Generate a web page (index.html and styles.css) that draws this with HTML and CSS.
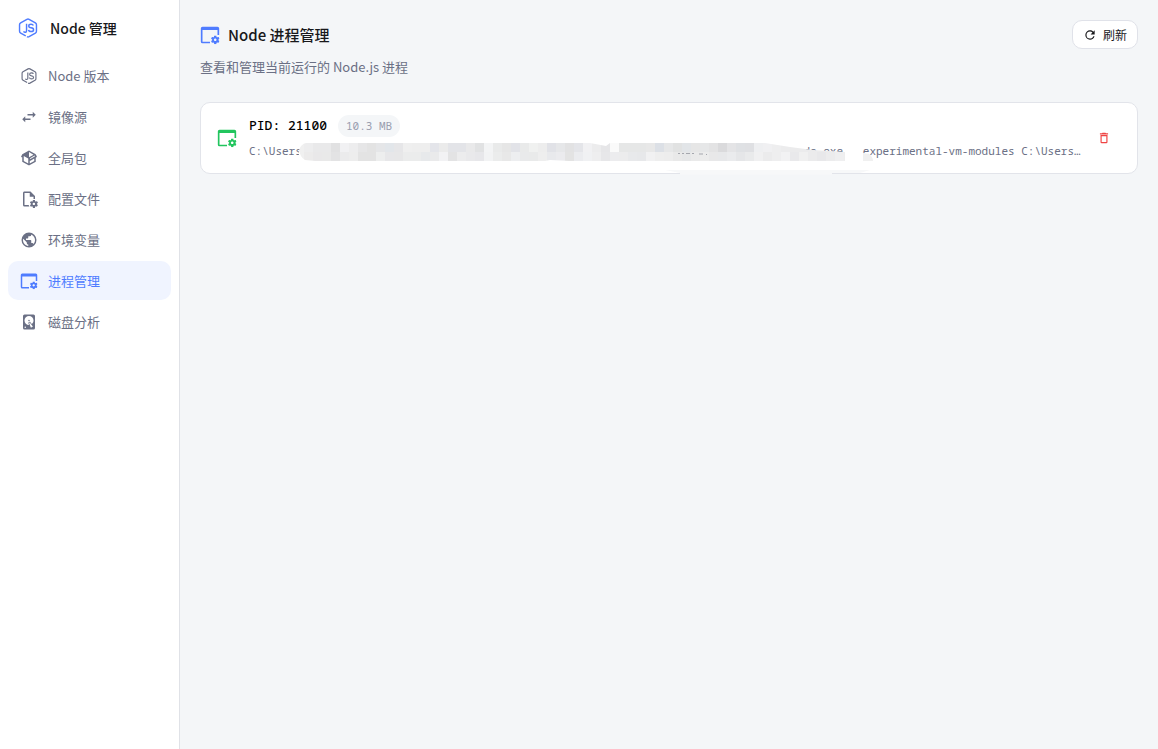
FILE: index.html
```html
<!DOCTYPE html>
<html lang="zh-CN">

<head>
    <meta charset="UTF-8">
    <meta name="viewport" content="width=device-width, initial-scale=1.0">
    <title>Node 管理</title>
    <link rel="stylesheet" href="styles.css">
</head>

<body>
    <!-- Icon sprite -->
    <svg class="sprite" aria-hidden="true">
        <symbol id="icon-node" viewBox="-1 -1 26 26">
            <path d="M9.300 21.300L3.400 18Q2 17.200 2 15.800V8.200Q2 6.800 3.300 6L10.700 1.700Q12 1 13.300 1.700L20.700 6Q22 6.800 22 8.200V15.800Q22 17.200 20.700 18L13.300 22.300Q12 23 10.800 22.300M10.300 7V15Q10.300 17.200 8.300 17L6.500 16.300M18.300 9Q17.800 7.500 15.600 7.500Q12.900 7.500 12.900 9.500Q12.900 11.400 15.600 11.700Q18.600 12 18.600 14Q18.600 16.200 15.700 16.200Q12.900 16.200 12.700 14.200" fill="none" stroke="currentColor" stroke-width="1.700" />
        </symbol>
        <symbol id="icon-swap" viewBox="0 0 24 24">
            <path d="M21,9L17,5V8H10V10H17V13M7,11L3,15L7,19V16H14V14H7V11Z" />
        </symbol>
        <symbol id="icon-package" viewBox="0 0 24 24">
            <path d="M2,10.96C1.5,10.68 1.35,10.07 1.63,9.59L3.13,7C3.24,6.8 3.41,6.66 3.6,6.58L11.43,2.18C11.59,2.06 11.79,2 12,2C12.21,2 12.41,2.06 12.57,2.18L20.47,6.62C20.66,6.72 20.82,6.88 20.91,7.08L22.36,9.6C22.64,10.08 22.47,10.69 22,10.96L21,11.54V16.5C21,16.88 20.79,17.21 20.47,17.38L12.57,21.82C12.41,21.94 12.21,22 12,22C11.79,22 11.59,21.94 11.43,21.82L3.53,17.38C3.21,17.21 3,16.88 3,16.5V10.96C2.7,11.13 2.32,11.14 2,10.96M12,4.15V10.85L17.96,7.5L12,4.15M5,15.91L11,19.29V12.58L5,9.21V15.91M19,15.91V12.69L14,15.59C13.67,15.77 13.3,15.76 13,15.6V19.29L19,15.91M13.85,13.36L20.13,9.73L19.55,8.72L13.27,12.35L13.85,13.36Z" />
            <path d="M12 3L3.500 7.700L12 12.200Z" />
        </symbol>
        <symbol id="icon-cog" viewBox="14 14 10 10">
            <path d="M22.7,19.6V18.6L23.8,17.8C23.9,17.7 24,17.6 23.9,17.5L22.9,15.8C22.9,15.7 22.7,15.7 22.6,15.7L21.4,16.2C21.1,16 20.8,15.8 20.5,15.7L20.3,14.4C20.3,14.3 20.2,14.2 20.1,14.2H18.1C17.9,14.2 17.8,14.3 17.8,14.4L17.6,15.7C17.3,15.9 17.1,16 16.8,16.2L15.6,15.7C15.5,15.7 15.4,15.7 15.3,15.8L14.3,17.5C14.3,17.6 14.3,17.7 14.4,17.8L15.5,18.6V19.6L14.4,20.4C14.3,20.5 14.2,20.6 14.3,20.7L15.3,22.4C15.4,22.5 15.5,22.5 15.6,22.5L16.8,22C17,22.2 17.3,22.4 17.6,22.5L17.8,23.8C17.9,23.9 18,24 18.1,24H20.1C20.2,24 20.3,23.9 20.3,23.8L20.5,22.5C20.8,22.3 21,22.2 21.3,22L22.5,22.4C22.6,22.4 22.7,22.4 22.8,22.3L23.8,20.6C23.9,20.5 23.9,20.4 23.8,20.4L22.7,19.6M19,20.5C18.2,20.5 17.5,19.8 17.5,19S18.2,17.5 19,17.5 20.5,18.2 20.5,19 19.9,20.5 19,20.5Z" />
        </symbol>
        <symbol id="icon-file" viewBox="0 0 24 24">
            <path d="M6,2C4.890,2 4,2.900 4,4V20A2,2 0 0,0 6,22H12.500L11.500,20H6V4H13V9H18V12H20V8L14,2H6Z" />
            <use href="#icon-cog" x="13" y="13" width="11" height="11" />
        </symbol>
        <symbol id="icon-earth" viewBox="0 0 24 24">
            <path d="M17.9,17.39C17.64,16.59 16.89,16 16,16H15V13A1,1 0 0,0 14,12H8V10H10A1,1 0 0,0 11,9V7H13A2,2 0 0,0 15,5V4.59C17.93,5.77 20,8.64 20,12C20,14.08 19.2,15.97 17.9,17.39M11,19.93C7.05,19.44 4,16.08 4,12C4,11.38 4.08,10.78 4.21,10.21L9,15V16A2,2 0 0,0 11,18M12,2A10,10 0 0,0 2,12A10,10 0 0,0 12,22A10,10 0 0,0 22,12A10,10 0 0,0 12,2Z" />
        </symbol>
        <symbol id="icon-app" viewBox="0 0 24 24">
            <path d="M3,2H21A2,2 0 0,1 23,4V12H21V6H3V20H12V22H3A2,2 0 0,1 1,20V4A2,2 0 0,1 3,2Z" />
            <use href="#icon-cog" x="13" y="12.500" width="10.500" height="10.500" />
        </symbol>
        <symbol id="icon-disk" viewBox="0 0 24 24">
            <path d="M6,2H18A2,2 0 0,1 20,4V20A2,2 0 0,1 18,22H6A2,2 0 0,1 4,20V4A2,2 0 0,1 6,2M12,4A6,6 0 0,0 6,10C6,13.31 8.69,16 12.1,16L11.22,13.77C10.95,13.29 11.11,12.68 11.59,12.4L12.45,11.9C12.93,11.63 13.54,11.79 13.82,12.27L15.74,14.69C17.12,13.59 18,11.9 18,10A6,6 0 0,0 12,4M12,9A1,1 0 0,1 13,10A1,1 0 0,1 12,11A1,1 0 0,1 11,10A1,1 0 0,1 12,9M7,18A1,1 0 0,0 6,19A1,1 0 0,0 7,20A1,1 0 0,0 8,19A1,1 0 0,0 7,18M12.09,13.27L14.58,19.58L17.17,18.08L12.95,12.77L12.09,13.27Z" />
        </symbol>
        <symbol id="icon-refresh" viewBox="0 0 24 24">
            <path d="M17.65,6.35C16.2,4.9 14.21,4 12,4A8,8 0 0,0 4,12A8,8 0 0,0 12,20C15.73,20 18.84,17.45 19.73,14H17.65C16.83,16.33 14.61,18 12,18A6,6 0 0,1 6,12A6,6 0 0,1 12,6C13.66,6 15.14,6.69 16.22,7.78L13,11H20V4L17.65,6.35Z" />
        </symbol>
        <symbol id="icon-delete" viewBox="0 0 24 24">
            <path d="M6,19A2,2 0 0,0 8,21H16A2,2 0 0,0 18,19V7H6V19M8,9H16V19H8V9M15.5,4L14.5,3H9.5L8.5,4H5V6H19V4H15.5Z" />
        </symbol>
    </svg>

    <div class="app">
        <aside class="sidebar">
            <div class="brand">
                <svg class="icon brand-icon"><use href="#icon-node" /></svg>
                <span>Node 管理</span>
            </div>
            <nav class="menu">
                <a href="#versions" class="menu-item"><svg class="icon"><use href="#icon-node" /></svg>Node 版本</a>
                <a href="#mirror" class="menu-item"><svg class="icon"><use href="#icon-swap" /></svg>镜像源</a>
                <a href="#packages" class="menu-item"><svg class="icon"><use href="#icon-package" /></svg>全局包</a>
                <a href="#config" class="menu-item"><svg class="icon"><use href="#icon-file" /></svg>配置文件</a>
                <a href="#env" class="menu-item"><svg class="icon"><use href="#icon-earth" /></svg>环境变量</a>
                <a href="#process" class="menu-item active"><svg class="icon"><use href="#icon-app" /></svg>进程管理</a>
                <a href="#disk" class="menu-item"><svg class="icon"><use href="#icon-disk" /></svg>磁盘分析</a>
            </nav>
        </aside>

        <main class="content">
            <header class="page-header">
                <div>
                    <h1 class="page-title"><svg class="icon icon-lg"><use href="#icon-app" /></svg>Node 进程管理</h1>
                    <p class="page-desc">查看和管理当前运行的 Node.js 进程</p>
                </div>
                <button type="button" class="btn-refresh"><svg class="icon icon-sm"><use href="#icon-refresh" /></svg>刷新</button>
            </header>

            <section class="process-card">
                <svg class="icon icon-lg process-icon"><use href="#icon-app" /></svg>
                <div class="process-info">
                    <div class="process-head">
                        <span class="pid">PID: 21100</span>
                        <span class="memory">10.3 MB</span>
                    </div>
                    <p class="command">C:\Users\<span class="hidden-path"></span>node.exe --experimental-vm-modules C:\Users…</p>
                </div>
                <button type="button" class="btn-delete" aria-label="结束进程"><svg class="icon icon-sm"><use href="#icon-delete" /></svg></button>

                <!-- Mosaic over the private part of the path -->
                <svg class="mosaic" width="576" height="34" viewBox="298 141 576 34" aria-hidden="true">
                    <defs>
                        <clipPath id="mosaic-shape">
                            <path d="M299 150Q301 144 306 143H590L606 146L610 143H765L790 147L813 150L845 152V161H569L550 160L545 161H315L305 160Q300 157 299 150Z" />
                        </clipPath>
                    </defs>
                    <path class="mosaic-blank" d="M299 150H800L813 151L845 152H847V151H862V153H866V161H299Z" />
                    <g id="mosaic-cells" clip-path="url(#mosaic-shape)"></g>
                    <path class="mosaic-edge" d="M863 153L869 154Q873 157 873 161H863Z" />
                    <path class="mosaic-mark" d="M678 153.500H680M682 153.500H684M686 153.500H690M692 153.500H694M699 154H703M706 154.500H707" />
                    <path class="mosaic-smear" d="M665 170H870L860 173H832V174.500H680V173Z" />
                </svg>
            </section>
        </main>
    </div>

    <script src="script.js"></script>
</body>

</html>
```
FILE: styles.css
```css
* {
    box-sizing: border-box;
}

body {
    margin: 0;
    font-family: "Noto Sans CJK SC", sans-serif;
    font-size: 13px;
    line-height: 18px;
    color: #18181b;
    background-color: #f4f6f8;
}

.sprite {
    display: none;
}

.icon {
    flex: none;
    width: 18px;
    height: 18px;
    fill: currentColor;
}

.icon-lg {
    width: 20px;
    height: 20px;
}

.icon-sm {
    width: 14px;
    height: 14px;
}

.app {
    display: flex;
    min-height: 100vh;
}

/* Sidebar */
.sidebar {
    flex: none;
    width: 180px;
    padding: 8px;
    background-color: #fff;
    border-right: 1px solid #e0e2e7;
}

.brand {
    display: flex;
    align-items: center;
    gap: 11px;
    height: 40px;
    padding: 0 9px;
    font-size: 14px;
    font-weight: 500;
}

.brand-icon {
    width: 22px;
    height: 22px;
    color: #4f7cff;
}

.menu {
    display: flex;
    flex-direction: column;
    gap: 2px;
    margin-top: 8px;
}

.menu-item {
    display: flex;
    align-items: center;
    gap: 10px;
    height: 39px;
    padding: 0 12px;
    border-radius: 10px;
    color: #6b7085;
    text-decoration: none;
}

.menu-item.active {
    color: #4f7cff;
    background-color: #f0f4ff;
}

/* Content */
.content {
    flex: 1;
    min-width: 0;
    padding: 20px;
}

.page-header {
    display: flex;
    justify-content: space-between;
    align-items: flex-start;
    margin-bottom: 24px;
}

.page-title {
    display: flex;
    align-items: center;
    gap: 8px;
    margin: 0;
    font-size: 15px;
    font-weight: 500;
    line-height: 30px;
}

.page-title .icon {
    color: #4f7cff;
}

.page-desc {
    margin: 8px 0 2px;
    color: #6b7085;
}

.btn-refresh {
    display: flex;
    align-items: center;
    gap: 6px;
    height: 29px;
    padding: 0 10px;
    border: 1px solid #e0e2e9;
    border-radius: 10px;
    background-color: #fff;
    color: #18181b;
    font-family: inherit;
    font-size: 12px;
}

/* Process card */
.process-card {
    position: relative;
    display: flex;
    align-items: center;
    padding: 12px 16px;
    border: 1px solid #e2e4ea;
    border-radius: 10px;
    background-color: #fff;
    font-family: "Noto Sans Mono", "DejaVu Sans Mono", "Noto Sans CJK SC", monospace;
}

.process-icon {
    margin-right: 12px;
    color: #22c55e;
}

.process-info {
    flex: 1;
    min-width: 0;
    padding: 0 4px 2px 0;
}

.process-head {
    display: flex;
    align-items: flex-start;
    gap: 11px;
}

.pid {
    line-height: 20px;
    font-weight: 500;
    color: #000;
}

.memory {
    padding: 2px 8px;
    border-radius: 12px;
    background-color: #f4f6f8;
    color: #9a9eb0;
    font-size: 11px;
}

.command {
    margin: 6px 0 0;
    overflow: hidden;
    white-space: nowrap;
    text-overflow: ellipsis;
    font-size: 11px;
    line-height: 16px;
    color: #6b7085;
}

.hidden-path {
    display: inline-block;
    width: 73ch;
}

.btn-delete {
    display: flex;
    align-items: center;
    justify-content: center;
    width: 34px;
    height: 30px;
    padding: 0;
    border: none;
    background: none;
    color: #ef4444;
}

.mosaic {
    position: absolute;
    top: 38px;
    left: 97px;
}

.mosaic-blank {
    fill: #fff;
}

.mosaic-edge {
    fill: #f0f0f0;
}

.mosaic-mark {
    fill: none;
    stroke: #a5a7ae;
}

.mosaic-smear {
    fill: #f7f8f9;
}
```
FILE: script.js
```js
// Shades of the mosaic cells, one list per row
const rows = [
    'f0f0f0 ededee e9e9ea e9e9ea e1e1e2 f1f1f3 ededee e6e6e7 e3e3e3 e5e6e8 e2e6ea e6e6e8 efefef eeeeee eeeeee e4e5ea ebebeb e3e4e8 e3e4e8 e9e9ea e1e2e3 f3f4f5 e9eaea e6e6e6 e2e3e8 e9eaea f0f1f0 ededed e1e2e7 e6e7e9 e2e2e3 e4e5e9 f1f1f3 ececed e6e6e8 fafafa e6e7e7 e6e7e7 e6e7e7 e8e8e8 dce0e6 e6e7e8 e1e2e2 e2e5e8 e6e6e6 e6e7e8 e3e3e4 dadadc e4e4e6 dfe1e4 dfe0e3 eeeff1 f0f0f2 eeeeef ececed ebebec ebebec ebebec ebebec ebebec ebebec ebebec',
    'f0f0f0 ecebeb e9e8e9 e9e9e9 e3e3e4 ebebec ededed e3e3e3 e3e3e3 edeeee e7e7e9 e7e7e8 ebecec ebecec e7e9eb eaeaeb f2f2f4 e3e3e4 ececed e9e9eb e7e7ea f2f3f4 ebecec e8e8e8 edeef0 e9eaeb e9eaea eeeeee e8e9ec ebebee e3e3e3 ebecef f0f1f3 eeeeef e7e7e9 ececee ececed e8e9eb e7e8ea f1f1f2 eeeeee ededed e9e9e9 e6e7e8 eaeaea ececec e8e8e9 e7e8ea eaebed e5e6e8 e9eaeb f0f0f1 ebebec eeeeef f2f2f3 e9e9eb f0f0f0 ebebec e8e8ea ececed efeff0 eeeeee'
];

const group = document.getElementById('mosaic-cells');

rows.forEach((row, y) => {
    row.split(' ').forEach((shade, x) => {
        const cell = document.createElementNS('http://www.w3.org/2000/svg', 'rect');
        cell.setAttribute('x', 295 + x * 9);
        cell.setAttribute('y', 143 + y * 9);
        cell.setAttribute('width', 9);
        cell.setAttribute('height', 9);
        cell.setAttribute('fill', '#' + shade);
        group.appendChild(cell);
    });
});
```
